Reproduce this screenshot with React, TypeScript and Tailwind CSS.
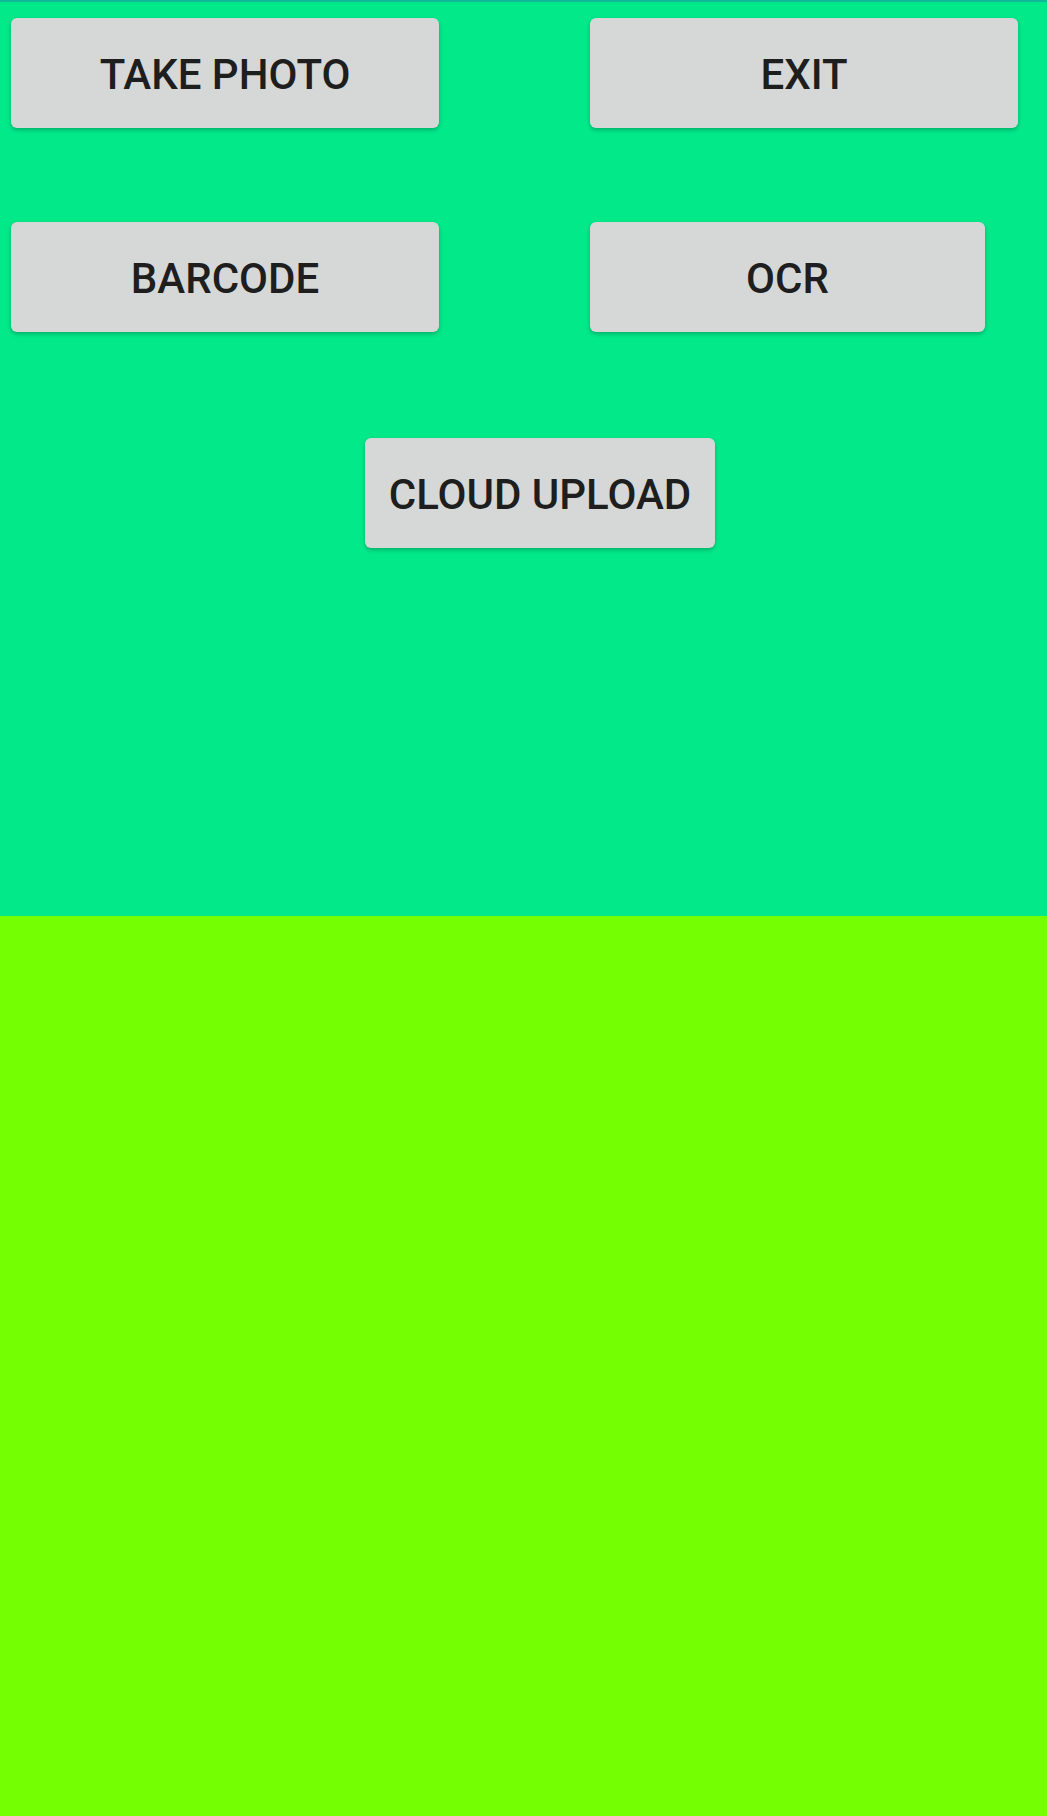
export default function App() {
  const btn =
    "h-[110px] pt-[3px] rounded-[6px] bg-[#d6d8d7] text-[#1e1e1e] text-[42px] font-medium uppercase flex items-center justify-center shadow-[0_2px_4px_rgba(0,0,0,0.25)]";

  return (
    <div className="w-[1047px] h-[1816px] flex flex-col font-['Roboto','Liberation_Sans',sans-serif]">
      <div className="h-[916px] bg-[#02e98a] border-t-2 border-[#12b996] flex flex-col">
        <div className="flex mt-[16px] ml-[11px]">
          <button className={`${btn} w-[428px]`}>Take Photo</button>
          <button className={`${btn} w-[428px] ml-[151px]`}>Exit</button>
        </div>
        <div className="flex mt-[94px] ml-[11px]">
          <button className={`${btn} w-[428px]`}>Barcode</button>
          <button className={`${btn} w-[395px] ml-[151px]`}>OCR</button>
        </div>
        <div className="flex mt-[106px] ml-[365px]">
          <button className={`${btn} w-[350px]`}>Cloud Upload</button>
        </div>
      </div>
      <div className="flex-1 bg-[#74ff02]"></div>
    </div>
  );
}
